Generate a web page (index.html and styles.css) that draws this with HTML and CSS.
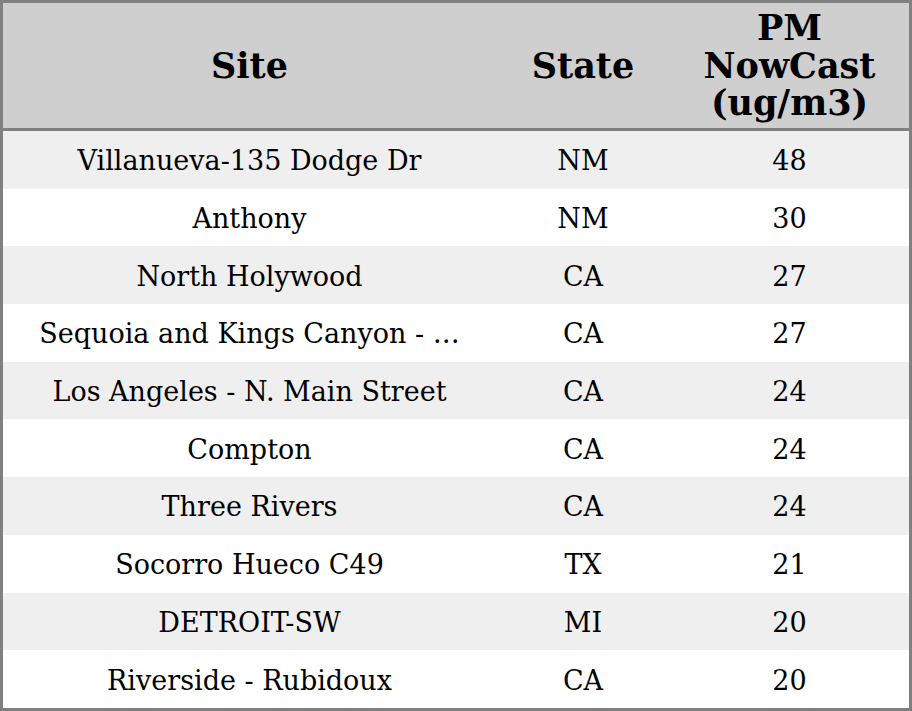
FILE: index.html
```html
<!DOCTYPE html>
<html>
<head>
<meta charset="utf-8">
<link rel="stylesheet" href="styles.css">
</head>
<body>
<table class="aq">
  <colgroup>
    <col class="c-site">
    <col class="c-state">
    <col class="c-pm">
  </colgroup>
  <thead>
    <tr><th>Site</th><th>State</th><th>PM<br>NowCast<br>(ug/m3)</th></tr>
  </thead>
  <tbody>
    <tr><td>Villanueva-135 Dodge Dr</td><td>NM</td><td>48</td></tr>
    <tr><td>Anthony</td><td>NM</td><td>30</td></tr>
    <tr><td>North Holywood</td><td>CA</td><td>27</td></tr>
    <tr><td>Sequoia and Kings Canyon - …</td><td>CA</td><td>27</td></tr>
    <tr><td>Los Angeles - N. Main Street</td><td>CA</td><td>24</td></tr>
    <tr><td>Compton</td><td>CA</td><td>24</td></tr>
    <tr><td>Three Rivers</td><td>CA</td><td>24</td></tr>
    <tr><td>Socorro Hueco C49</td><td>TX</td><td>21</td></tr>
    <tr><td>DETROIT-SW</td><td>MI</td><td>20</td></tr>
    <tr><td>Riverside - Rubidoux</td><td>CA</td><td>20</td></tr>
  </tbody>
</table>
</body>
</html>
```
FILE: styles.css
```css
html, body {
  margin: 0;
  padding: 0;
  background: #ffffff;
}
.aq {
  width: 912px;
  border-collapse: separate;
  border-spacing: 0;
  border: 3px solid #808080;
  table-layout: fixed;
  font-family: "DejaVu Serif", serif;
  color: #000;
}
.c-site { width: 493px; }
.c-state { width: 174px; }
.c-pm { width: 239px; }
.aq th {
  background: #cfcfcf;
  font-size: 35px;
  font-weight: bold;
  line-height: 37.5px;
  height: 128px;
  padding: 0;
  text-align: center;
  vertical-align: middle;
  border-bottom: 3px solid #808080;
  box-sizing: border-box;
}
.aq td {
  font-size: 27px;
  height: 57.7px;
  padding: 2px 0 0 0;
  text-align: center;
  vertical-align: middle;
  white-space: nowrap;
  overflow: hidden;
  box-sizing: border-box;
}
.aq tbody tr:nth-child(odd) td {
  background: #efefef;
}
```
